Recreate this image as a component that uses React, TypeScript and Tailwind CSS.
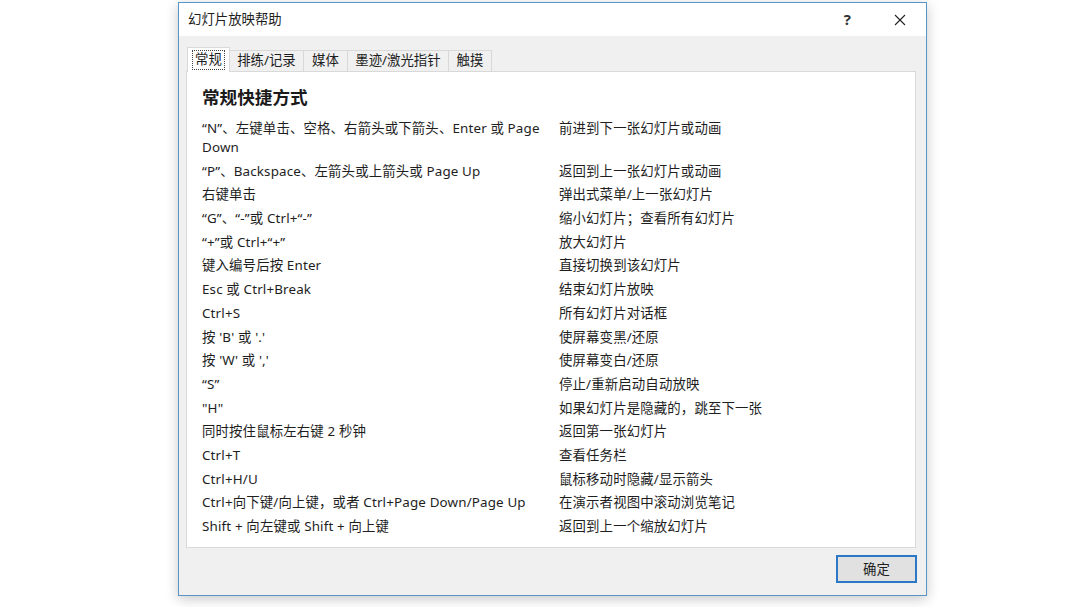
import React from 'react'

const rows: [React.ReactNode, string][] = [
  [<>“N”、左键单击、空格、右箭头或下箭头、Enter 或 Page<br />Down</>, '前进到下一张幻灯片或动画'],
  ['“P”、Backspace、左箭头或上箭头或 Page Up', '返回到上一张幻灯片或动画'],
  ['右键单击', '弹出式菜单/上一张幻灯片'],
  ['“G”、“-”或 Ctrl+“-”', '缩小幻灯片；查看所有幻灯片'],
  ['“+”或 Ctrl+“+”', '放大幻灯片'],
  ['键入编号后按 Enter', '直接切换到该幻灯片'],
  ['Esc 或 Ctrl+Break', '结束幻灯片放映'],
  ['Ctrl+S', '所有幻灯片对话框'],
  ["按 'B' 或 '.'", '使屏幕变黑/还原'],
  ["按 'W' 或 ','", '使屏幕变白/还原'],
  ['“S”', '停止/重新启动自动放映'],
  ['"H"', '如果幻灯片是隐藏的，跳至下一张'],
  ['同时按住鼠标左右键 2 秒钟', '返回第一张幻灯片'],
  ['Ctrl+T', '查看任务栏'],
  ['Ctrl+H/U', '鼠标移动时隐藏/显示箭头'],
  ['Ctrl+向下键/向上键，或者 Ctrl+Page Down/Page Up', '在演示者视图中滚动浏览笔记'],
  ['Shift + 向左键或 Shift + 向上键', '返回到上一个缩放幻灯片'],
]

const tabs = [
  { label: '排练/记录', w: 'w-[74px]' },
  { label: '媒体', w: 'w-[44px]' },
  { label: '墨迹/激光指针', w: 'w-[101px]' },
  { label: '触摸', w: 'w-[43px]' },
]

export default function App() {
  return (
    <div
      className="w-[1080px] h-[607px] bg-white pl-[178px] pt-[2px] text-[#1e1e1e]"
      style={{ fontFamily: '"Noto Sans", "Noto Sans CJK SC", sans-serif' }}
    >
      <div className="w-[749px] h-[594px] flex flex-col border border-[#5a93c6] bg-[#f0f0f0] shadow-[0_3px_12px_rgba(0,0,0,0.22)]">
        {/* Title bar */}
        <div className="h-[33px] bg-white flex items-center pl-[9px] text-[13.4px]">
          <span>幻灯片放映帮助</span>
          <span className="ml-auto mr-[43px] text-[15px] font-bold text-[#333]">?</span>
          <svg className="mr-[20px]" width="12" height="12" viewBox="0 0 12 12">
            <path d="M1 1 L11 11 M11 1 L1 11" stroke="#222" strokeWidth="1.1" fill="none" />
          </svg>
        </div>

        {/* Body */}
        <div className="flex-1 flex flex-col pl-[7px] pr-[10px] pt-[11px]">
          {/* Tabs */}
          <div className="flex items-end h-[24px] text-[13.4px] leading-none">
            <div className="relative z-10 -mb-px w-[43px] h-[25px] ml-px bg-white border border-b-0 border-[#d9d9d9] flex items-center justify-center">
              <span className="border border-dotted border-[#444] px-[2px] py-[2px]">常规</span>
            </div>
            {tabs.map((t) => (
              <div
                key={t.label}
                className={`${t.w} h-[21px] bg-[#f0f0f0] border border-l-0 border-b-0 border-[#d9d9d9] flex items-center justify-center`}
              >
                {t.label}
              </div>
            ))}
          </div>

          {/* Panel */}
          <div className="flex-1 bg-white border border-[#d9d9d9] pl-[15px] pt-[12px]">
            <h2
              className="text-[17.6px] font-bold leading-[26px] text-[#1a1a1a]"
              style={{ fontFamily: '"Noto Sans CJK SC", sans-serif' }}
            >
              常规快捷方式
            </h2>
            <div className="mt-[9px] grid grid-cols-[357px_1fr] gap-y-[4.7px] text-[13.4px] leading-[19px] tracking-[0.15px]">
              {rows.map(([k, v], i) => (
                <React.Fragment key={i}>
                  <div>{k}</div>
                  <div>{v}</div>
                </React.Fragment>
              ))}
            </div>
          </div>

          {/* Footer */}
          <div className="h-[47px] flex justify-end items-start pt-[7px] -mr-[1px]">
            <button className="w-[81px] h-[28px] bg-[#e1e1e1] border-2 border-[#2a78c6] text-[13.4px] flex items-center justify-center">
              确定
            </button>
          </div>
        </div>
      </div>
    </div>
  )
}
